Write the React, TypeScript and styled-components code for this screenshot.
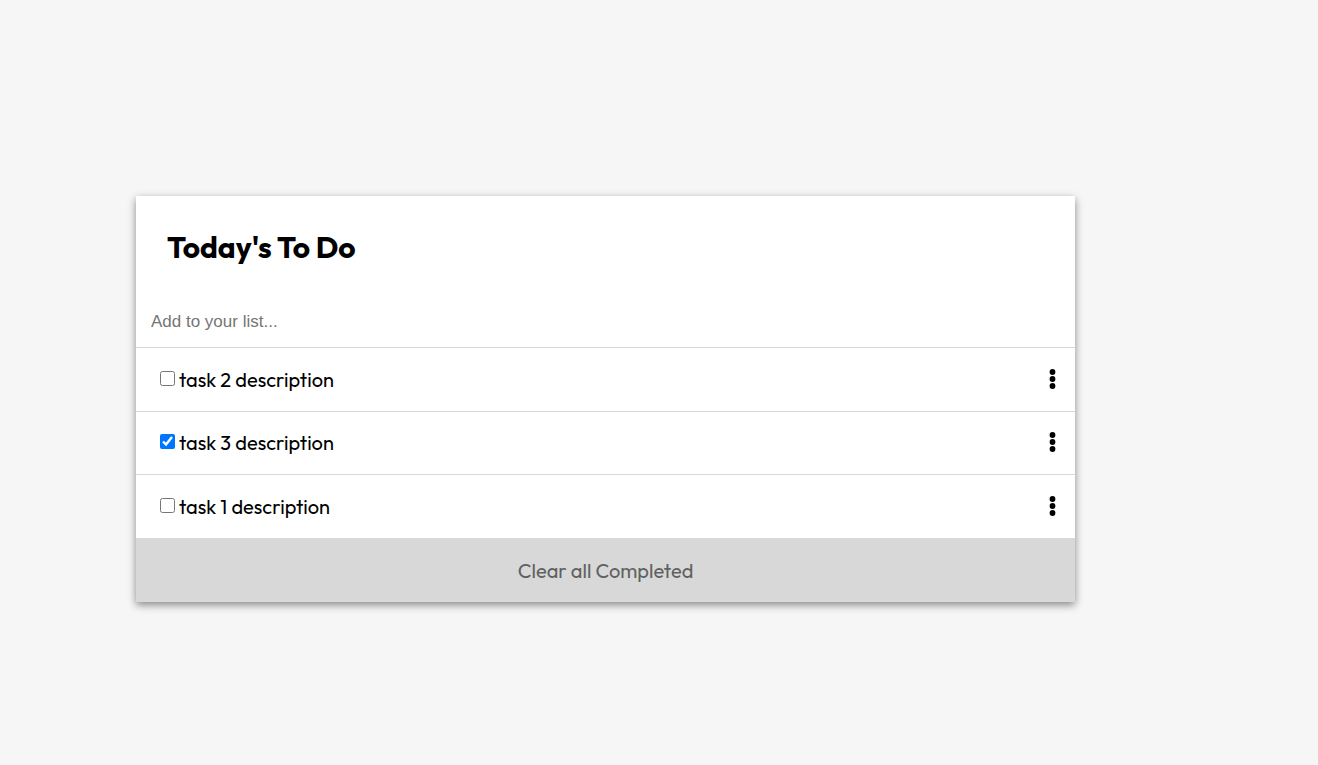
import React, { useState } from 'react';
import styled, { createGlobalStyle } from 'styled-components';

const GlobalStyle = createGlobalStyle`
  * {
    box-sizing: border-box;
  }

  body {
    margin: 0;
    background: #f6f6f6;
    color: #000;
    font-family: Outfit, Lato, sans-serif;
    font-size: 20px;
  }
`;

const Page = styled.main`
  padding: 196px 243px 64px 136px;
`;

const Card = styled.section`
  display: flex;
  flex-direction: column;
  background: #fff;
  box-shadow: 0 3px 8px rgba(0, 0, 0, 0.45);
`;

const Title = styled.h1`
  margin: 0;
  padding: 31px 31px 29px;
  font-size: 30px;
  line-height: 40px;
  font-weight: 700;
`;

const NewTask = styled.input`
  width: 100%;
  height: 51px;
  padding: 0 15px;
  border: none;
  outline: none;
  background: transparent;
  font-family: 'Liberation Sans', Arial, sans-serif;
  font-size: 17px;

  &::placeholder {
    color: #757575;
  }
`;

const TaskList = styled.ul`
  display: grid;
  grid-auto-rows: 1fr;
  min-height: 191px;
  margin: 0;
  padding: 0;
  list-style: none;
`;

const TaskRow = styled.li`
  display: flex;
  align-items: center;
  justify-content: space-between;
  padding: 0 16px 2px 24px;
  border-top: 1px solid #d8d8d8;
`;

const TaskLabel = styled.label`
  display: flex;
  align-items: center;
  gap: 4px;
  line-height: 24px;
`;

const Checkbox = styled.input`
  width: 15px;
  height: 15px;
  margin: 0;
`;

const TaskText = styled.span`
  padding-top: 3px;
`;

const MenuButton = styled.button`
  display: flex;
  padding: 1px 3px 0;
  border: none;
  background: transparent;
  color: inherit;
  cursor: pointer;
`;

const ClearButton = styled.button`
  height: 64px;
  padding: 0 16px;
  border: none;
  background: #d8d8d8;
  color: #616161;
  font: inherit;
  cursor: pointer;
`;

const DotsIcon = () => (
  <svg width="7" height="20" viewBox="0 0 7 20" fill="currentColor" aria-hidden="true">
    <circle cx="3.5" cy="3" r="2.9" />
    <circle cx="3.5" cy="10" r="2.9" />
    <circle cx="3.5" cy="17" r="2.9" />
  </svg>
);

interface Task {
  id: number;
  description: string;
  completed: boolean;
}

const initialTasks: Task[] = [
  { id: 2, description: 'task 2 description', completed: false },
  { id: 3, description: 'task 3 description', completed: true },
  { id: 1, description: 'task 1 description', completed: false },
];

export default function App() {
  const [tasks, setTasks] = useState(initialTasks);

  const toggle = (id: number) =>
    setTasks(tasks.map((t) => (t.id === id ? { ...t, completed: !t.completed } : t)));

  return (
    <>
      <GlobalStyle />
      <Page>
        <Card>
          <Title>Today's To Do</Title>
          <NewTask type="text" placeholder="Add to your list..." aria-label="Add to your list" />
          <TaskList>
            {tasks.map((task) => (
              <TaskRow key={task.id}>
                <TaskLabel>
                  <Checkbox
                    type="checkbox"
                    checked={task.completed}
                    onChange={() => toggle(task.id)}
                  />
                  <TaskText>{task.description}</TaskText>
                </TaskLabel>
                <MenuButton type="button" aria-label="Task options">
                  <DotsIcon />
                </MenuButton>
              </TaskRow>
            ))}
          </TaskList>
          <ClearButton type="button" onClick={() => setTasks(tasks.filter((t) => !t.completed))}>
            Clear all Completed
          </ClearButton>
        </Card>
      </Page>
    </>
  );
}
